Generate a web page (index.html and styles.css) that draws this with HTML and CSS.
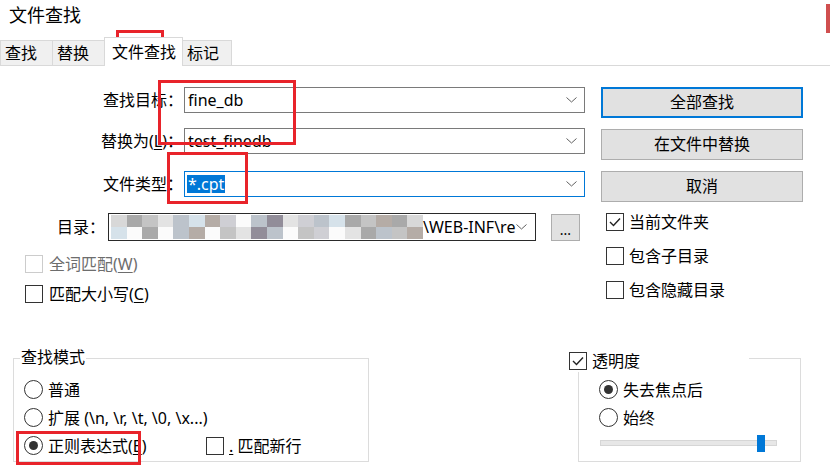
FILE: index.html
```html
<!DOCTYPE html>
<html lang="zh-CN">
<head>
<meta charset="utf-8">
<title>文件查找</title>
<link rel="stylesheet" href="styles.css">
</head>
<body>
<div class="title">文件查找</div>
<div class="tabs">
  <div class="tab t1">查找</div>
  <div class="tab t2">替换</div>
  <div class="tab active">文件查找</div>
  <div class="tab t4">标记</div>
</div>

<div class="main">
  <div class="left">
    <div class="frow r1">
      <div class="lbl">查找目标：</div>
      <div class="combo"><span>fine_db</span><svg class="chev" width="11" height="6" viewBox="0 0 11 6"><polyline points="0.5,0.5 5.5,5 10.5,0.5" fill="none" stroke="#606060" stroke-width="1"/></svg></div>
    </div>
    <div class="frow r2">
      <div class="lbl">替换为(<u>L</u>)：</div>
      <div class="combo"><span>test_finedb</span><svg class="chev" width="11" height="6" viewBox="0 0 11 6"><polyline points="0.5,0.5 5.5,5 10.5,0.5" fill="none" stroke="#606060" stroke-width="1"/></svg></div>
    </div>
    <div class="frow r3">
      <div class="lbl">文件类型：</div>
      <div class="combo focus"><span class="sel">*.cpt</span><svg class="chev" width="11" height="6" viewBox="0 0 11 6"><polyline points="0.5,0.5 5.5,5 10.5,0.5" fill="none" stroke="#606060" stroke-width="1"/></svg></div>
    </div>
    <div class="drow">
      <div class="dlbl">目录：</div>
      <div class="dcombo">
        <div class="mosaic">
          <span class="g3"></span><span class="g1"></span><span class="g2"></span><span class="g4"></span><span class="g5"></span><span class="g6"></span><span class="g7"></span><span class="g8"></span><span class="g0"></span><span class="g5"></span><span class="g9"></span><span class="g4"></span><span class="g8"></span><span class="g5"></span><span class="g6"></span><span class="g1"></span><span class="g2"></span><span class="g7"></span><span class="g1"></span><span class="g3"></span>
          <span class="g6"></span><span class="g0"></span><span class="g1"></span><span class="g0"></span><span class="g5"></span><span class="g7"></span><span class="g0"></span><span class="g2"></span><span class="g4"></span><span class="g9"></span><span class="g5"></span><span class="g0"></span><span class="g2"></span><span class="g8"></span><span class="g0"></span><span class="g4"></span><span class="g1"></span><span class="g5"></span><span class="g2"></span><span class="g7"></span>
        </div>
        <span class="dtext">\WEB-INF\re</span>
        <svg class="chev" width="11" height="6" viewBox="0 0 11 6"><polyline points="0.5,0.5 5.5,5 10.5,0.5" fill="none" stroke="#606060" stroke-width="1"/></svg>
      </div>
      <div class="dots">...</div>
    </div>
    <div class="crow c1"><span class="box dis"></span><span class="dtxt">全词匹配(<u>W</u>)</span></div>
    <div class="crow c2"><span class="box"></span><span>匹配大小写(<u>C</u>)</span></div>
  </div>

  <div class="right">
    <div class="btn default">全部查找</div>
    <div class="btn">在文件中替换</div>
    <div class="btn">取消</div>
    <div class="rchk first"><span class="box checked"><svg width="12" height="10" viewBox="0 0 12 10"><polyline points="1,5 4.5,8.5 11,1.5" fill="none" stroke="#222" stroke-width="1.4"/></svg></span><span>当前文件夹</span></div>
    <div class="rchk"><span class="box"></span><span>包含子目录</span></div>
    <div class="rchk"><span class="box"></span><span>包含隐藏目录</span></div>
  </div>
</div>

<div class="bottom">
  <div class="group g-mode">
    <div class="legend">查找模式</div>
    <div class="rrow first"><span class="radio"></span><span>普通</span></div>
    <div class="rrow"><span class="radio"></span><span>扩展 (\n, \r, \t, \0, \x...)</span></div>
    <div class="rrow">
      <div class="rlabel"><span class="radio on"></span><span>正则表达式(<u>E</u>)</span></div>
      <span class="box"></span><span class="nl"><u>.</u> 匹配新行</span>
    </div>
  </div>
  <div class="group g-trans">
    <div class="legend2"><span class="box checked"><svg width="12" height="10" viewBox="0 0 12 10"><polyline points="1,5 4.5,8.5 11,1.5" fill="none" stroke="#222" stroke-width="1.4"/></svg></span><span>透明度</span></div>
    <div class="rrow first2"><span class="radio on"></span><span>失去焦点后</span></div>
    <div class="rrow"><span class="radio"></span><span>始终</span></div>
    <div class="slider"><div class="track"><div class="thumb"></div></div></div>
  </div>
</div>

<div class="mark m-tab"></div>
<div class="mark m-find"></div>
<div class="mark m-type"></div>
<div class="mark m-regex"></div>
<div class="close-edge"></div>
</body>
</html>
```

FILE: styles.css
```css
* { box-sizing: border-box; }
html, body { margin: 0; padding: 0; background: #fff; }
body {
  width: 830px;
  height: 476px;
  overflow: hidden;
  position: relative;
  font-family: "Noto Sans", "Noto Sans CJK SC", sans-serif;
  font-size: 16px;
  line-height: 20px;
  color: #000;
}
u { text-decoration: underline; text-underline-offset: 2px; }

.title { height: 37px; padding: 3px 0 0 9px; font-size: 18px; line-height: 24px; }

.tabs {
  display: flex;
  align-items: flex-end;
  height: 29px;
  border-bottom: 1px solid #d9d9d9;
}
.tab {
  height: 25px;
  background: #f0f0f0;
  border: 1px solid #d9d9d9;
  border-bottom: none;
  margin-right: -1px;
  padding: 0 15px 0 4px;
  line-height: 24px;
}
.tab.active {
  height: 29px;
  margin-bottom: -1px;
  background: #fff;
  padding: 0 6px 0 7px;
  line-height: 28px;
  position: relative;
  z-index: 1;
}
.tab.t4 { padding: 0 12px 0 4px; }

.main { display: flex; height: 280px; }
.left { width: 601px; padding-top: 21px; }
.frow { display: flex; align-items: center; height: 26px; }
.frow.r2 { margin-top: 15px; }
.frow.r3 { margin-top: 17px; }
.lbl { width: 184px; text-align: right; padding-right: 1px; }
.combo {
  width: 401px;
  height: 26px;
  border: 1px solid #7a7a7a;
  display: flex;
  align-items: center;
  justify-content: space-between;
  padding: 0 7px 0 3px;
}
.combo.focus { border-color: #0078d7; padding-left: 2px; }
.sel { background: #0078d7; color: #fff; padding: 0 1px; line-height: 18px; }

.drow { display: flex; align-items: center; height: 28px; margin-top: 16px; }
.dlbl { width: 105px; text-align: right; }
.dcombo {
  margin-left: 3px;
  width: 428px;
  height: 28px;
  border: 1px solid #2a2a2a;
  display: flex;
  align-items: center;
  padding: 0 8px 0 2px;
}
.mosaic {
  width: 312px;
  height: 24px;
  display: grid;
  grid-template-columns: repeat(20, 1fr);
  grid-template-rows: 12px 12px;
}
.g0 { background: #fbfbfb; }
.g1 { background: #a9a9a9; }
.g2 { background: #c4c4c4; }
.g3 { background: #d8d8d8; }
.g4 { background: #e3e3e3; }
.g5 { background: #bcc3cb; }
.g6 { background: #d6e2ea; }
.g7 { background: #b5aca6; }
.g8 { background: #cfcfd4; }
.g9 { background: #928d99; }
.dtext { flex: 1; padding-left: 0; }
.dots {
  margin-left: 15px;
  width: 29px;
  height: 27px;
  background: #e1e1e1;
  border: 1px solid #adadad;
  text-align: center;
  line-height: 30px;
  font-size: 14px;
}

.crow { display: flex; align-items: center; height: 18px; margin-left: 25px; gap: 6px; }
.crow.c1 { margin-top: 14px; }
.crow.c2 { margin-top: 12px; }
.dtxt { color: #6d6d6d; }

.box {
  width: 18px;
  height: 18px;
  border: 1px solid #333;
  background: #fff;
  display: inline-flex;
  align-items: center;
  justify-content: center;
  flex: none;
}
.box.dis { border-color: #cccccc; }

.right { width: 202px; padding-top: 21px; }
.btn {
  height: 31px;
  background: #e1e1e1;
  border: 1px solid #adadad;
  text-align: center;
  line-height: 29px;
  margin-bottom: 11px;
}
.btn.default { border: 2px solid #0078d7; line-height: 27px; }
.rchk { display: flex; align-items: center; height: 18px; gap: 5px; padding-left: 5px; margin-top: 16px; }
.rchk.first { margin-top: 7px; }

.bottom { display: flex; }
.group {
  margin-top: 12px;
  height: 104px;
  border: 1px solid #dcdcdc;
}
.g-mode { margin-left: 13px; width: 356px; padding-left: 10px; }
.legend {
  width: max-content;
  margin: -12px 0 0 -4px;
  padding: 0 1px;
  background: #fff;
  line-height: 20px;
}
.rrow { display: flex; align-items: center; height: 19px; margin-top: 9px; gap: 5px; }
.rrow.first { margin-top: 13px; }
.radio {
  width: 19px;
  height: 19px;
  border: 1px solid #333;
  border-radius: 50%;
  background: #fff;
  display: inline-flex;
  align-items: center;
  justify-content: center;
  flex: none;
}
.radio.on::after {
  content: "";
  width: 9px;
  height: 9px;
  border-radius: 50%;
  background: #333;
}
.rlabel { display: flex; align-items: center; gap: 5px; width: 177px; }
.nl { margin-left: 0; }

.g-trans { margin-left: 209px; width: 223px; padding-left: 20px; }
.legend2 {
  display: flex;
  align-items: center;
  gap: 5px;
  width: 181px;
  height: 22px;
  margin: -9px 0 0 -31px;
  padding-left: 1px;
  background: #fff;
}
.rrow.first2 { margin-top: 8px; }
.slider { width: 177px; height: 17px; margin: 7px 0 0 1px; display: flex; align-items: center; }
.track {
  flex: 1;
  height: 6px;
  background: #e7e7e7;
  border: 1px solid #d6d6d6;
  position: relative;
}
.thumb {
  position: absolute;
  left: 156px;
  top: -6px;
  width: 8px;
  height: 17px;
  background: #0078d7;
}

.mark { position: absolute; border: 3px solid #e8232a; }
.m-tab { left: 116px; top: 30px; width: 48px; height: 32px; }
.m-find { left: 158px; top: 80px; width: 138px; height: 65px; }
.m-type { left: 167px; top: 152px; width: 81px; height: 52px; }
.m-regex { left: 16px; top: 431px; width: 125px; height: 34px; }
.close-edge { position: absolute; left: 826px; top: 4px; width: 4px; height: 29px; background: #d04f4f; }
```
